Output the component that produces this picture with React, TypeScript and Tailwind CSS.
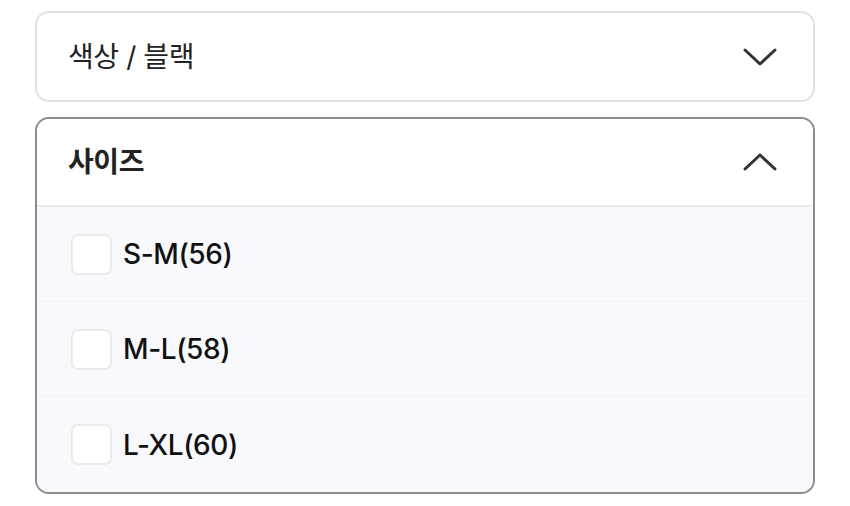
import React from "react";

const font = { fontFamily: 'Inter, "Noto Sans CJK KR", "Noto Sans", sans-serif' };

function ChevronDown() {
  return (
    <svg width="34" height="20" viewBox="0 0 34 20" fill="none">
      <path d="M2 3 L17 17 L32 3" stroke="#333" strokeWidth="3" strokeLinecap="round" strokeLinejoin="round" />
    </svg>
  );
}
function ChevronUp() {
  return (
    <svg width="34" height="20" viewBox="0 0 34 20" fill="none">
      <path d="M2 17 L17 3 L32 17" stroke="#333" strokeWidth="3" strokeLinecap="round" strokeLinejoin="round" />
    </svg>
  );
}

const sizes = ["S-M(56)", "M-L(58)", "L-XL(60)"];

export default function App() {
  return (
    <div className="w-[850px] h-[506px] bg-white pl-[35px] pt-[11px] flex flex-col gap-[15px]">
      <div className="w-[780px] h-[91px] border-2 border-[#e2e2e2] rounded-[14px] flex items-center justify-between pl-[31px] pr-[36px]">
        <span className="text-[28px] text-[#222] tracking-[-0.4px]" style={font}>색상 / 블랙</span>
        <ChevronDown />
      </div>
      <div className="w-[780px] border-2 border-[#8c8c8c] rounded-[14px] overflow-hidden">
        <div className="h-[88px] flex items-center justify-between pl-[31px] pr-[36px] bg-white border-b-2 border-[#ececec]">
          <span className="text-[28px] font-bold text-[#222] tracking-[-0.4px]" style={font}>사이즈</span>
          <ChevronUp />
        </div>
        <div className="bg-[#f7f9fc]">
          {sizes.map((s, i) => (
            <div
              key={s}
              className={
                "h-[95px] flex items-center pl-[34px] gap-[11px] " +
                (i < sizes.length - 1 ? "border-b border-[#f0f2f5]" : "")
              }
            >
              <div className="w-[41px] h-[41px] rounded-[7px] border-2 border-[#ebebeb] bg-white" />
              <span className="text-[28px] font-medium text-[#111] tracking-[-0.4px]" style={font}>{s}</span>
            </div>
          ))}
        </div>
      </div>
    </div>
  );
}
